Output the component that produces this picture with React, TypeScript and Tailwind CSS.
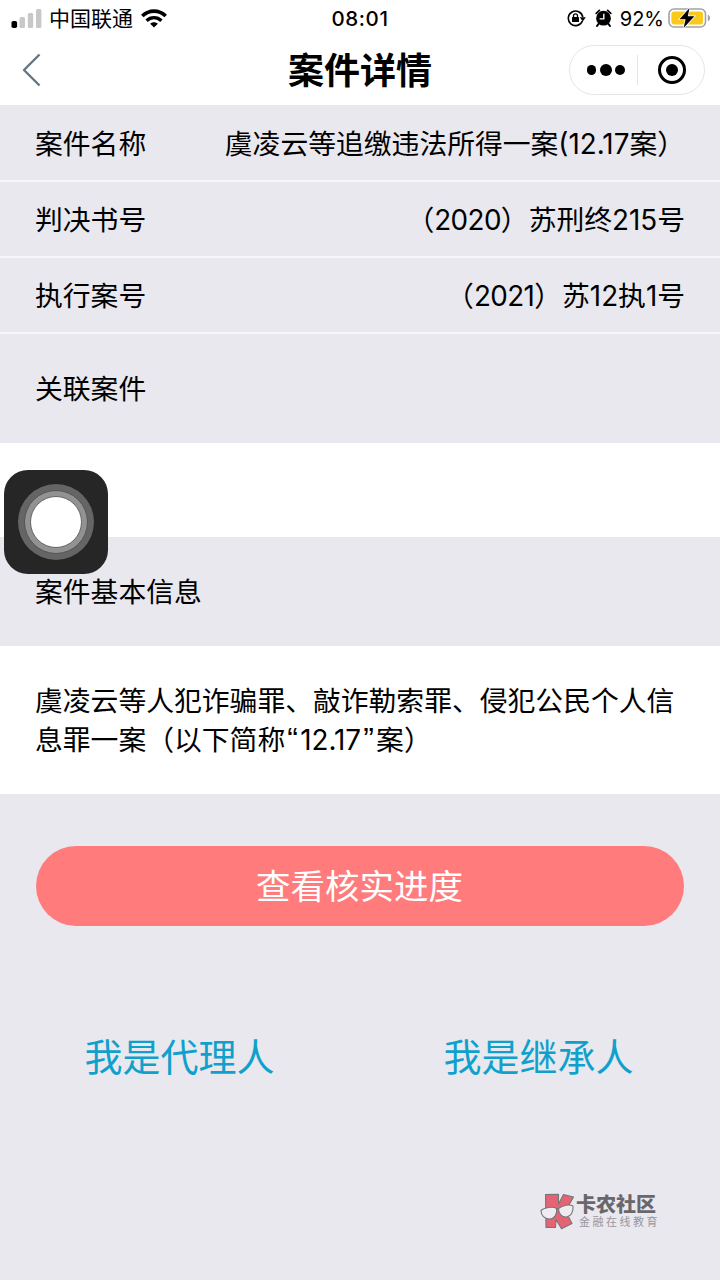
import React from "react";

function StatusBar() {
  return (
    <div className="flex h-9 items-center justify-between pl-[11px] pr-[9px]">
      <div className="flex w-[240px] items-center">
        <svg className="h-[19px] w-[31px]" viewBox="0 0 31 19">
          <rect x="0.5" y="12" width="5.6" height="7" rx="1.8" fill="#000" />
          <rect x="8.6" y="8" width="5.4" height="11" rx="1.5" fill="#c8c8c8" />
          <rect x="16.8" y="4" width="5.4" height="15" rx="1.5" fill="#c8c8c8" />
          <rect x="25" y="0" width="5.4" height="19" rx="1.5" fill="#c8c8c8" />
        </svg>
        <span className="ml-[7px] pt-0.5 text-[21px] leading-[34px]">中国联通</span>
        <svg className="ml-2 h-[19px] w-[26px]" viewBox="0 0 26 19" fill="none" stroke="#000" strokeWidth="3.6">
          <path d="M1.3 7.1C8 .4 18 .4 24.7 7.1" />
          <path d="M5.600 11.700c4.200-4 10.600-4 14.800 0" strokeWidth="3.300" />
          <path d="M13 18.6l-3.8-3.8c2.100-2 5.500-2 7.600 0z" fill="#000" stroke="none" />
        </svg>
      </div>
      <span className="pr-0.5 pt-0.5 text-[20.500px] font-medium leading-[34px] tracking-[0.6px]">08:01</span>
      <div className="flex w-[240px] items-center justify-end">
        <svg className="h-[18px] w-[19px]" viewBox="0 0 19 18" fill="none" stroke="#000" strokeWidth="1.600">
          <path d="M15.400 12A7.300 7.300 0 1 1 15.800 8" />
          <path d="M12.800 8.200h6l-3 4.200z" fill="#000" stroke="none" />
          <rect x="5" y="8" width="7" height="5" rx="0.6" fill="#000" stroke="none" />
          <path d="M6.500 8.200V6.800a2 2 0 0 1 4 0v1.400" strokeWidth="1.300" />
        </svg>
        <svg className="ml-[9px] h-[18px] w-[17px]" viewBox="0 0 17 18">
          <circle cx="8.5" cy="9.2" r="7.4" />
          <path d="M1.200 4.300L4.400 1.300M15.800 4.300L12.600 1.300" stroke="#000" strokeWidth="1.700" strokeLinecap="round" />
          <path d="M3.800 14.600L2 17M13.200 14.600L15 17" stroke="#000" strokeWidth="2" strokeLinecap="round" />
          <path d="M8.800 4.800v5.100H4.600" stroke="#fff" strokeWidth="1.400" fill="none" />
        </svg>
        <span className="ml-[8px] pt-0.5 text-[20px] leading-[34px]">92%</span>
        <svg className="ml-[4px] h-[22px] w-[43px]" viewBox="0 0 43 22">
          <rect x="1" y="2" width="36.5" height="18" rx="5" fill="#fff" stroke="#a3a3a3" strokeWidth="1.6" />
          <rect x="3.4" y="4.400" width="31.600" height="13.200" rx="2.8" fill="#fbc91c" />
          <path d="M39.800 7.800c3 .8 3 5.600 0 6.400z" fill="#a3a3a3" />
          <path d="M21.500 1L11.500 12.200h6.100L15.600 21l10.800-11.800h-6.600z" fill="#000" stroke="#fff" strokeWidth="1.500" paintOrder="stroke" />
        </svg>
      </div>
    </div>
  );
}

function NavBar() {
  return (
    <div className="flex h-[68px] items-center justify-between pl-[22px] pr-[15px]">
      <div className="flex w-[136px]">
        <svg className="h-[34px] w-5" viewBox="0 0 20 34" fill="none" stroke="#637684" strokeWidth="2.4" strokeLinejoin="round">
          <path d="M17.500 1.500L2 17l15.500 15.500" />
        </svg>
      </div>
      <h1 className="pr-[7px] pt-[3px] text-[36px] font-bold leading-[65px]">案件详情</h1>
      <div className="flex h-[50px] w-[136px] items-center rounded-full border border-[#e5e5e5]">
        <div className="flex flex-1 items-center justify-center gap-[3.500px] pl-1">
          <span className="size-[9.500px] rounded-full bg-black" />
          <span className="size-3 rounded-full bg-black" />
          <span className="size-[9.500px] rounded-full bg-black" />
        </div>
        <div className="h-[30px] w-px bg-[#e5e5e5]" />
        <div className="flex flex-1 items-center justify-center pl-0.5">
          <div className="flex size-7 items-center justify-center rounded-full border-[3px] border-black">
            <span className="size-3 rounded-full bg-black" />
          </div>
        </div>
      </div>
    </div>
  );
}

function Row({ label, children }: { label: string; children: React.ReactNode }) {
  return (
    <div className="flex h-[76px] items-center justify-between border-b-2 border-[#f6f6fa] px-[35px] pt-[3px] first:h-[77px]">
      <span>{label}</span>
      <span>{children}</span>
    </div>
  );
}

function Year({ children }: { children: React.ReactNode }) {
  return <span className="tracking-[-0.6px]">{children}</span>;
}

function Quote({ children }: { children: React.ReactNode }) {
  return (
    <span className="inline-block w-[15px] text-center font-['Liberation_Sans',sans-serif] text-[32px] leading-none">
      {children}
    </span>
  );
}

function Watermark() {
  return (
    <div className="mt-auto mb-[50px] mr-[60px] flex items-center self-end">
      <svg className="h-[37px] w-[36px]" viewBox="0 0 36 37" stroke="#77747a" strokeWidth="1.100" strokeLinejoin="round">
        <path d="M5.500 1.500L18.500 1.200 18.500 11 23.500 1.500 33.500 4 25.500 18 32 30.500 21.500 35.800 16 26.500 15.500 34.500 6 34.500z" fill="#e46474" />
        <path d="M1 17.500c3-3 12-4.500 15.500-2 1 6-2 10.300-7 10.500-5 .2-8.500-3.500-8.500-8.500z" fill="#eeecf0" />
        <path d="M18.500 15.500c4-3.500 11-4.500 14.500-2.500.5 6-2 10.500-6.500 11-4.500.5-8-3.500-8-8.500z" fill="#eeecf0" />
        <path d="M16.500 16.500l2-.7" fill="none" />
      </svg>
      <div className="flex flex-col">
        <span className="text-[20px] font-black leading-[21px] text-[#69676c]">卡农社区</span>
        <span className="pl-[3px] text-[11px] leading-[13px] tracking-[2.500px] text-[#98969c]">金融在线教育</span>
      </div>
    </div>
  );
}

export default function App() {
  return (
    <div className="relative flex h-[1280px] w-[720px] flex-col overflow-hidden bg-[#e9e8ee] font-[Inter,'Noto_Sans_CJK_SC',sans-serif] text-[27.800px] leading-[39px] text-black">
      <header className="h-[105px] shrink-0 bg-white">
        <StatusBar />
        <NavBar />
      </header>
      <section>
        <Row label="案件名称">虞凌云等追缴违法所得一案(12.17案）</Row>
        <Row label="判决书号">
          （<Year>2020</Year>）苏刑终215号
        </Row>
        <Row label="执行案号">
          （<Year>2021</Year>）苏12执1号
        </Row>
        <div className="flex h-[109px] items-center px-[35px] pt-px">关联案件</div>
      </section>
      <div className="h-[94px] shrink-0 bg-white" />
      <div className="flex h-[109px] shrink-0 items-center px-[35px] pt-px">案件基本信息</div>
      <div className="h-[148px] shrink-0 bg-white px-[35px] pt-9">
        <p className="whitespace-nowrap">
          虞凌云等人犯诈骗罪、敲诈勒索罪、侵犯公民个人信
          <br />
          息罪一案（以下简称<Quote>“</Quote>12.17<Quote>”</Quote>案）
        </p>
      </div>
      <button className="mx-9 mt-[52px] h-20 shrink-0 rounded-full bg-[#ff7b7c] pr-px text-[34.500px] text-white">查看核实进度</button>
      <div className="mt-[103px] flex pr-0.5 text-[38px] leading-[56px] text-[#10a0cc]">
        <a className="flex-1 text-center">我是代理人</a>
        <a className="flex-1 text-center">我是继承人</a>
      </div>
      <Watermark />
      <div className="absolute left-1 top-[470px] flex size-[104px] items-center justify-center rounded-[24px] bg-[#262626]">
        <div className="flex size-[76px] items-center justify-center rounded-full bg-[#656565]">
          <div className="flex size-16 items-center justify-center rounded-full border border-[#555] bg-[#929292]">
            <div className="size-[52px] rounded-full border border-[#666] bg-white" />
          </div>
        </div>
      </div>
    </div>
  );
}
